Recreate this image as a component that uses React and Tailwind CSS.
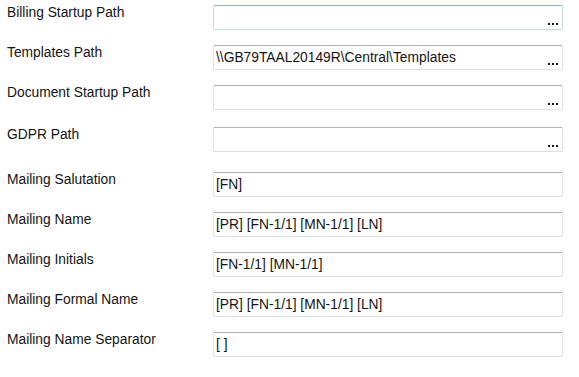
const rows = [
  { label: 'Billing Startup Path', value: '', browse: true, hover: true, mb: 'mb-[15px]' },
  { label: 'Templates Path', value: '\\\\GB79TAAL20149R\\Central\\Templates', browse: true, mb: 'mb-[15px]' },
  { label: 'Document Startup Path', value: '', browse: true, mb: 'mb-[17px]' },
  { label: 'GDPR Path', value: '', browse: true, mb: 'mb-[20px]' },
  { label: 'Mailing Salutation', value: '[FN]', mb: 'mb-[15px]' },
  { label: 'Mailing Name', value: '[PR] [FN-1/1] [MN-1/1] [LN]', mb: 'mb-[15px]' },
  { label: 'Mailing Initials', value: '[FN-1/1] [MN-1/1]', mb: 'mb-[15px]' },
  { label: 'Mailing Formal Name', value: '[PR] [FN-1/1] [MN-1/1] [LN]', mb: 'mb-[15px]' },
  { label: 'Mailing Name Separator', value: '[ ]', mb: '' },
];

function Dots() {
  return (
    <div className="absolute right-[4px] bottom-[4px] flex gap-[2px]">
      <span className="w-[2px] h-[2px] bg-[#1a1a1a]" />
      <span className="w-[2px] h-[2px] bg-[#1a1a1a]" />
      <span className="w-[2px] h-[2px] bg-[#1a1a1a]" />
    </div>
  );
}

export default function App() {
  return (
    <div
      className="w-[579px] h-[377px] bg-white pt-[5px] pl-[7px] text-[13.8px] leading-[16px] text-[#141414]"
      style={{ fontFamily: '"Liberation Sans", Arial, sans-serif' }}
    >
      {rows.map((r) => (
        <div key={r.label} className={`flex ${r.mb}`}>
          <div className="w-[206px]">{r.label}</div>
          <div
            className={`relative w-[350px] h-[25px] rounded-[2px] border pl-[2px] pt-[4px] whitespace-nowrap ${
              r.hover
                ? 'border-[#c5dcef] border-t-[#8fb4d9]'
                : 'border-[#dde1e7] border-t-[#adb0b6]'
            }`}
          >
            {r.value}
            {r.browse && <Dots />}
          </div>
        </div>
      ))}
    </div>
  );
}
